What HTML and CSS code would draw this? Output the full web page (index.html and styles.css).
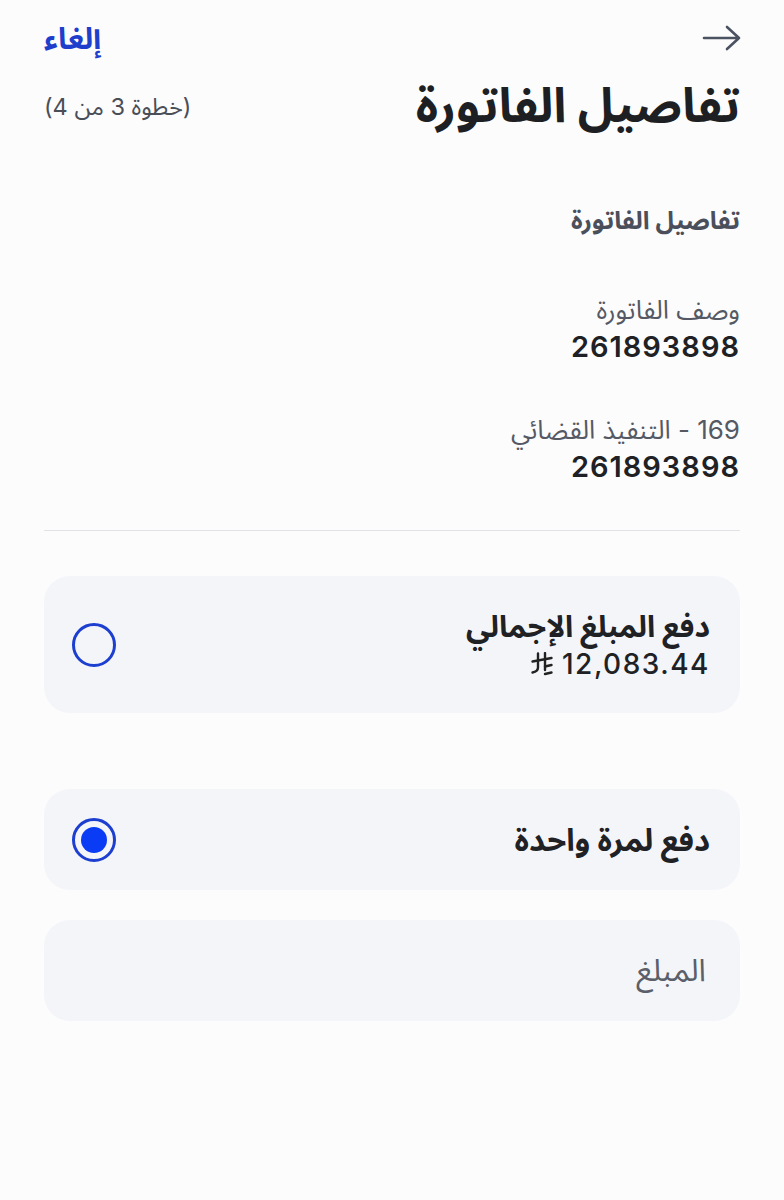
FILE: index.html
```html
<!DOCTYPE html>
<html lang="ar" dir="rtl">
<head>
<meta charset="utf-8">
<link rel="stylesheet" href="styles.css">
</head>
<body>
<div class="page">
  <div class="topbar">
    <svg class="back" width="40" height="28" viewBox="0 0 40 28"><path d="M2 14H37M25 3L37 14L25 25" fill="none" stroke="#4b5261" stroke-width="2.6" stroke-linecap="round" stroke-linejoin="round"/></svg>
    <span class="cancel">إلغاء</span>
  </div>
  <div class="titlerow">
    <h1 class="title">تفاصيل الفاتورة</h1>
    <span class="step">(خطوة 3 من 4)</span>
  </div>
  <h2 class="section">تفاصيل الفاتورة</h2>
  <div class="field">
    <div class="label">وصف الفاتورة</div>
    <div class="value">261893898</div>
  </div>
  <div class="field">
    <div class="label">169 - التنفيذ القضائي</div>
    <div class="value">261893898</div>
  </div>
  <hr class="divider">
  <div class="card total">
    <div class="cardtext">
      <div class="cardtitle">دفع المبلغ الإجمالي</div>
      <div class="amount"><span dir="ltr"><svg class="riyal" width="22" height="24" viewBox="0 0 22 24"><g fill="none" stroke="#222" stroke-width="2.4" stroke-linecap="round" stroke-linejoin="round"><path d="M7 1.5V15.5Q7 19.5 1.5 20.5"/><path d="M14 1V18"/><path d="M1.5 9.5L20.5 6"/><path d="M14 14.5L20.5 13"/><path d="M14 22L20.5 20.5"/></g></svg><span class="num">12,083.44</span></span></div>
    </div>
    <span class="radio"></span>
  </div>
  <div class="card once">
    <div class="cardtext">
      <div class="cardtitle">دفع لمرة واحدة</div>
    </div>
    <span class="radio checked"></span>
  </div>
  <div class="card input">
    <div class="placeholder">المبلغ</div>
  </div>
</div>
</body>
</html>
```

FILE: styles.css
```css
html, body {
  margin: 0;
  padding: 0;
  background: #fcfcfd;
}
body {
  font-family: Inter, "Noto Sans Arabic", "Noto Sans", "DejaVu Sans", sans-serif;
  color: #1f2024;
}
.page {
  padding: 0 44px;
}
.topbar {
  display: flex;
  justify-content: space-between;
  align-items: center;
  height: 40px;
  padding-top: 18px;
}
.back {
  margin-right: -2px;
}
.cancel {
  color: #1e3fcc;
  font-weight: 700;
  font-size: 30px;
  line-height: 40px;
}
.titlerow {
  display: flex;
  justify-content: space-between;
  align-items: center;
  margin-top: 19px;
  height: 56px;
}
.title {
  margin: 0;
  font-size: 48px;
  font-weight: 700;
  line-height: 56px;
  color: #1e1f23;
}
.step {
  font-size: 23.5px;
  color: #4a4e57;
  padding-top: 4px;
}
.section {
  margin: 71px 0 0 0;
  font-size: 25px;
  font-weight: 700;
  line-height: 32px;
  color: #4a4f5b;
}
.field {
  margin-top: 57px;
}
.field + .field {
  margin-top: 48px;
}
.label {
  font-size: 26px;
  color: #555963;
  line-height: 34px;
}
.value {
  font-size: 29px;
  font-weight: 600;
  letter-spacing: 1px;
  color: #202124;
  line-height: 36px;
  margin-top: 2px;
}
.divider {
  border: 0;
  border-top: 1.5px solid #e1e2e5;
  margin: 45px 0 0 0;
}
.card {
  background: #f4f5f9;
  border-radius: 26px;
  display: flex;
  justify-content: space-between;
  align-items: center;
  padding: 0 30px 0 28px;
  box-sizing: border-box;
}
.total {
  margin-top: 45px;
  height: 137px;
}
.once {
  margin-top: 76px;
  height: 101px;
}
.input {
  margin-top: 30px;
  height: 101px;
}
.cardtitle {
  font-size: 30px;
  font-weight: 700;
  color: #202124;
  line-height: 38px;
}
.once .cardtitle {
  font-size: 31px;
}
.amount {
  font-size: 28px;
  font-weight: 500;
  color: #202124;
  line-height: 38px;
}
.num {
  letter-spacing: 1.5px;
  margin-left: 9px;
}
.riyal {
  vertical-align: -2px;
}
.radio {
  width: 38px;
  height: 38px;
  border: 3.5px solid #1d3fd0;
  border-radius: 50%;
  display: flex;
  align-items: center;
  justify-content: center;
  box-sizing: content-box;
}
.radio.checked::after {
  content: "";
  width: 26px;
  height: 26px;
  border-radius: 50%;
  background: #0a3bf5;
}
.placeholder {
  font-size: 31px;
  color: #5b5f69;
  padding-right: 4px;
}
```
